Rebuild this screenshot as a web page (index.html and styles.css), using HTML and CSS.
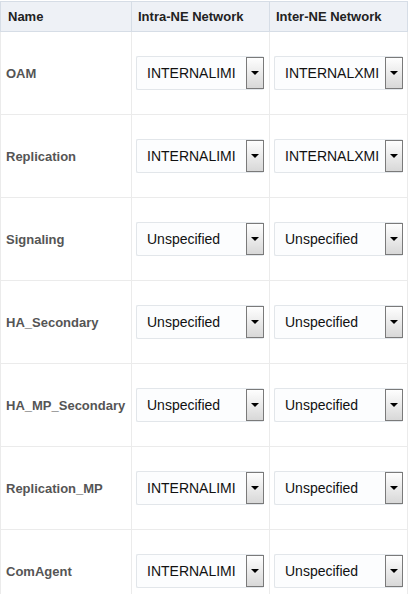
FILE: index.html
```html
<!DOCTYPE html>
<html>
	<head>
		<meta charset="utf-8" />
		<title>Networks</title>
		<link rel="stylesheet" href="styles.css">
	</head>
	<body>
		<table id="grid">
			<tr class="head">
				<th class="name">Name</th>
				<th>Intra-NE Network</th>
				<th>Inter-NE Network</th>
			</tr>
			<tr>
				<td class="name">OAM</td>
				<td><div class="sel"><span>INTERNALIMI</span><i></i></div></td>
				<td><div class="sel"><span>INTERNALXMI</span><i></i></div></td>
			</tr>
			<tr>
				<td class="name">Replication</td>
				<td><div class="sel"><span>INTERNALIMI</span><i></i></div></td>
				<td><div class="sel"><span>INTERNALXMI</span><i></i></div></td>
			</tr>
			<tr>
				<td class="name">Signaling</td>
				<td><div class="sel"><span>Unspecified</span><i></i></div></td>
				<td><div class="sel"><span>Unspecified</span><i></i></div></td>
			</tr>
			<tr>
				<td class="name">HA_Secondary</td>
				<td><div class="sel"><span>Unspecified</span><i></i></div></td>
				<td><div class="sel"><span>Unspecified</span><i></i></div></td>
			</tr>
			<tr>
				<td class="name">HA_MP_Secondary</td>
				<td><div class="sel"><span>Unspecified</span><i></i></div></td>
				<td><div class="sel"><span>Unspecified</span><i></i></div></td>
			</tr>
			<tr>
				<td class="name">Replication_MP</td>
				<td><div class="sel"><span>INTERNALIMI</span><i></i></div></td>
				<td><div class="sel"><span>Unspecified</span><i></i></div></td>
			</tr>
			<tr>
				<td class="name">ComAgent</td>
				<td><div class="sel"><span>INTERNALIMI</span><i></i></div></td>
				<td><div class="sel"><span>Unspecified</span><i></i></div></td>
			</tr>
		</table>
	</body>
</html>
```
FILE: styles.css
```css
*{margin:0;padding:0;box-sizing:border-box}
body{font-family:"Liberation Sans",Arial,sans-serif;background:#fff;padding-top:1px;}
#grid{border-collapse:collapse;table-layout:fixed;width:407px;}
#grid th,#grid td{border:1px solid #ebebeb;}
#grid th{height:30px;background:#eef1f6;border-color:#d6dde6;font-size:13px;color:#222;text-align:left;padding:0 6px;width:138px;}
#grid th.name{width:131px;padding-left:7px;}
#grid td{height:83px;padding:0 4px;vertical-align:middle;}
#grid td.name{font-size:13px;font-weight:bold;color:#555;padding-left:5px;}
.sel{display:flex;align-items:center;justify-content:space-between;height:34px;width:128px;
	 background:#fcfdfe;border:1px solid #e2e6ea;border-right:none;border-radius:2px;}
.sel span{font-size:14px;color:#111;padding-left:10px;}
.sel i{display:flex;align-items:center;justify-content:center;width:18px;height:32px;
	   border:1px solid #7a7a7a;background:linear-gradient(#fefefe,#d8d8d8);}
.sel i:after{content:"";border-left:4px solid transparent;border-right:4px solid transparent;border-top:4px solid #000;}
td:last-child .sel{width:129px;}
```
